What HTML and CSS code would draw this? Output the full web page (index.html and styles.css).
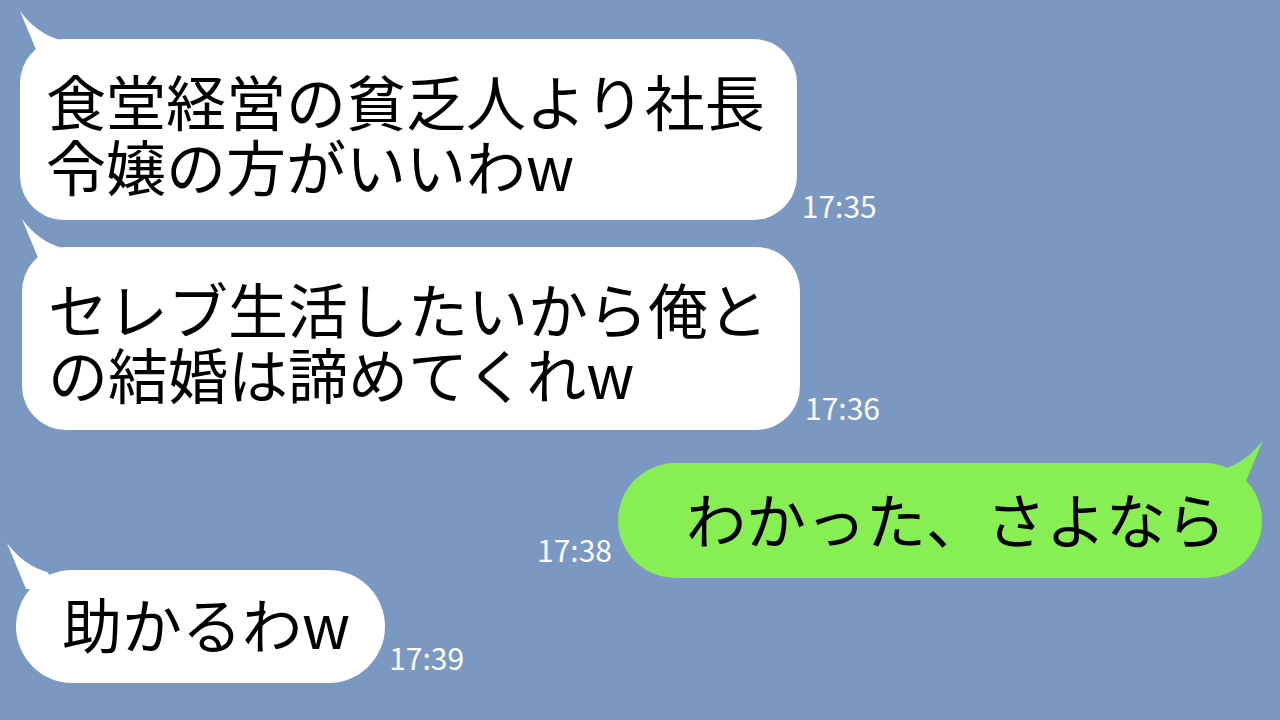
FILE: index.html
```html
<!DOCTYPE html>
<html lang="ja">
<head>
    <meta charset="UTF-8">
    <meta name="viewport" content="width=device-width, initial-scale=1.0">
    <title>トーク</title>
    <link rel="stylesheet" href="styles.css">
</head>
<body>
    <div class="chat">
        <div class="row row-first">
            <div class="bubble bubble-white">
                <svg class="tail" width="60" height="50" viewBox="0 0 60 50"><path d="M0 2 L19 48 L55 48 L40 31 Q16 24 0 2 Z"/></svg>
                <p class="text">食堂経営の貧乏人より社長<br>令嬢の方がいいわw</p>
            </div>
            <span class="time time-low">17:35</span>
        </div>

        <div class="row row-second">
            <div class="bubble bubble-white bubble-wide">
                <svg class="tail" width="60" height="50" viewBox="0 0 60 50"><path d="M0 2 L19 48 L55 48 L40 31 Q16 24 0 2 Z"/></svg>
                <p class="text">セレブ生活したいから俺と<br>の結婚は諦めてくれw</p>
            </div>
            <span class="time">17:36</span>
        </div>

        <div class="row row-mine">
            <span class="time time-high">17:38</span>
            <div class="bubble bubble-green">
                <svg class="tail tail-right" width="60" height="50" viewBox="0 0 60 50"><path d="M0 2 L19 48 L55 48 L40 31 Q16 24 0 2 Z"/></svg>
                <p class="text">わかった、さよなら</p>
            </div>
        </div>

        <div class="row row-last">
            <div class="bubble bubble-white bubble-short">
                <svg class="tail tail-short" width="60" height="50" viewBox="0 0 60 50"><path d="M0 2 L19 48 L55 48 L40 31 Q16 24 0 2 Z"/></svg>
                <p class="text">助かるわw</p>
            </div>
            <span class="time time-mid">17:39</span>
        </div>
    </div>
</body>
</html>
```

FILE: styles.css
```css
body {
    margin: 0;
    width: 1280px;
    height: 720px;
    overflow: hidden;
    background-color: #7b98c3;
    font-family: "Noto Sans CJK JP", "Noto Sans", sans-serif;
    color: #000;
}

.chat {
    display: flex;
    flex-direction: column;
}

.row {
    display: flex;
    align-items: flex-end;
    gap: 5px;
    padding-left: 20px;
}

.row-first {
    margin-top: 39px;
}

.row-second {
    margin-top: 27px;
    padding-left: 22px;
}

.row-mine {
    margin-top: 33px;
    justify-content: flex-end;
    padding-left: 0;
    padding-right: 18px;
    gap: 6px;
}

.row-last {
    margin-top: -8px;
    padding-left: 16px;
    gap: 4px;
}

.bubble {
    position: relative;
    border-radius: 44px;
    padding: 28px 32px 23px 26px;
}

.bubble-white {
    background-color: #fff;
    fill: #fff;
}

.bubble-wide {
    padding-bottom: 25px;
}

.bubble-green {
    background-color: #87ee54;
    fill: #87ee54;
    border-radius: 58px;
    padding: 22px 36px 28px 68px;
}

.bubble-short {
    border-radius: 57px;
    padding: 20px 35px 28px 46px;
}

.text {
    margin: 0;
    font-size: 60px;
    line-height: 65px;
    white-space: nowrap;
}

.tail {
    position: absolute;
    left: 0;
    top: -30px;
    overflow: visible;
}

.tail-short {
    left: -9px;
    top: -29px;
}

.tail-right {
    left: auto;
    right: -1px;
    top: -25px;
    transform: scaleX(-1);
}

.time {
    color: #fff;
    font-size: 30px;
    line-height: 30px;
    margin-bottom: 8px;
    white-space: nowrap;
}

.time-low {
    margin-bottom: 0;
}

.time-mid {
    margin-bottom: 11px;
}

.time-high {
    margin-bottom: 14px;
}
```
